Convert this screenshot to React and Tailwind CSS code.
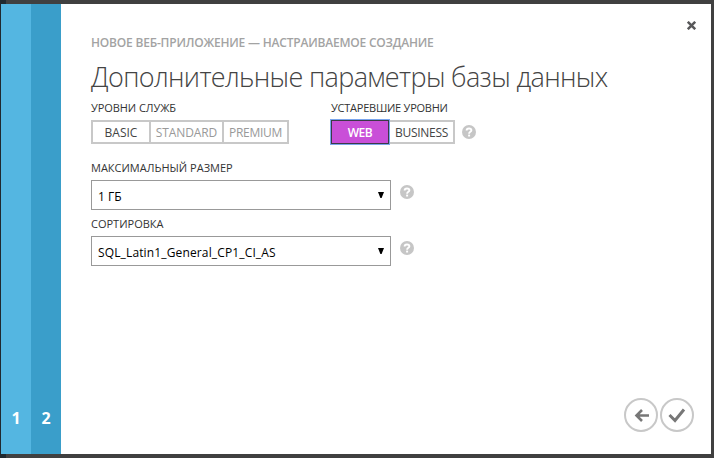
function Help({ className = '' }) {
  return (
    <svg className={`h-[14px] w-[14px] shrink-0 ${className}`} viewBox="0 0 14 14" fill="none">
      <circle cx="7" cy="7" r="7" fill="#c6c6c6" />
      <path d="M4.600 5.500C4.600 2.800 9.400 2.800 9.400 5.300C9.400 6.800 7.100 6.800 7.100 8.700" stroke="#fff" strokeWidth="1.900" />
      <path d="M6.100 9.600h2v1.900h-2z" fill="#fff" />
    </svg>
  );
}

function Label({ children, className = '' }) {
  return <div className={`h-4 whitespace-nowrap text-[11px] leading-4 text-[#333] ${className}`}>{children}</div>;
}

function Select({ value, className = '' }) {
  return (
    <div className="flex">
      <button className="flex h-[30px] w-[300px] items-center justify-between border border-[#999] bg-white pl-[6px] pr-[6px] text-[12px] text-black">
        <span className={`whitespace-nowrap pt-[3px] leading-4 ${className}`}>{value}</span>
        <svg className="-mt-px h-[6px] w-[6px]" viewBox="0 0 6 6">
          <path d="M0 0h6L3.600 6H2.400z" fill="#000" />
        </svg>
      </button>
      <Help className="ml-[9px] mt-[5px]" />
    </div>
  );
}

export default function App() {
  return (
    <div className="flex h-[458px] w-[714px] bg-[#404040] bg-linear-to-r from-[#20292f] from-[6px] to-[#404040] to-[6px] py-1 pl-px pr-[3px] font-['Open_Sans','Noto_Sans',sans-serif]">
      <div className="flex w-[30px] items-end justify-center bg-[#54b6e1] pb-[24px] text-[16px] font-bold leading-6 text-white">1</div>
      <div className="flex w-[30px] items-end justify-center bg-[#3a9eca] pb-[24px] text-[16px] font-bold leading-6 text-white">2</div>
      <div className="flex flex-1 flex-col bg-white pl-[30px]">
        <div className="flex justify-between">
          <div className="mt-[31px] h-4 whitespace-nowrap text-[12px] font-semibold leading-4 tracking-[-0.2px] text-[#a3a3a3]">
            НОВОЕ ВЕБ-ПРИЛОЖЕНИЕ — НАСТРАИВАЕМОЕ СОЗДАНИЕ
          </div>
          <button className="mr-[15px] mt-[17px] h-[9px] w-[9px]">
            <svg className="h-[9px] w-[9px]" viewBox="0 0 9 9" stroke="#58585a" strokeWidth="2.5">
              <path d="M.8.8l7.4 7.4M8.2.8L.8 8.2" />
            </svg>
          </button>
        </div>
        <h1 className="mt-[6px] h-10 whitespace-nowrap text-[27px] font-light leading-10 tracking-[-0.650px] text-[#444]">
          Дополнительные параметры базы данных
        </h1>
        <div className="mt-[3px] flex">
          <div className="w-[240px]">
            <Label className="tracking-[-0.070px]">УРОВНИ СЛУЖБ</Label>
            <div className="mt-[4px] flex h-6 w-[198px] border-2 border-[#c8c8c8] text-[12px] leading-[21px] text-[#999]">
              <button className="w-[56px] text-[#444]">BASIC</button>
              <button className="w-[73px] border-l-2 border-[#c8c8c8] tracking-[-0.120px]">STANDARD</button>
              <button className="w-[65px] border-l-2 border-[#c8c8c8] tracking-[-0.300px]">PREMIUM</button>
            </div>
          </div>
          <div>
            <Label className="tracking-[-0.240px]">УСТАРЕВШИЕ УРОВНИ</Label>
            <div className="mt-[4px] flex h-6 text-[12px]">
              <button className="z-10 h-6 w-[58px] border border-[#3b3b48] bg-[#c94fd8] pt-px font-semibold leading-[21px] tracking-[-0.500px] text-white shadow-[0_0_0_1px_#7aa5ec]">WEB</button>
              <button className="h-6 w-[66px] border-2 border-l-0 border-[#c8c8c8] pl-px leading-[21px] tracking-[-0.300px] text-[#444]">BUSINESS</button>
              <Help className="ml-[7px] mt-[5px]" />
            </div>
          </div>
        </div>
        <Label className="mt-[16px]">МАКСИМАЛЬНЫЙ РАЗМЕР</Label>
        <div className="mt-1"><Select value="1 ГБ" /></div>
        <Label className="mt-[6px]">СОРТИРОВКА</Label>
        <div className="mt-1"><Select value="SQL_Latin1_General_CP1_CI_AS" className="tracking-[0.140px]" /></div>
        <div className="mb-[22px] mr-[17px] mt-auto flex justify-end gap-[2px]">
          <button>
            <svg className="h-[34px] w-[34px]" viewBox="0 0 34 34" fill="none">
              <circle cx="17" cy="17" r="16" stroke="#c8c8c8" strokeWidth="2" />
              <path d="M25 17.500H12M18 12l-5.500 5.500 5.500 5.500" stroke="#777" strokeWidth="2.600" />
            </svg>
          </button>
          <button>
            <svg className="h-[34px] w-[34px]" viewBox="0 0 34 34" fill="none">
              <circle cx="17" cy="17" r="16" stroke="#c8c8c8" strokeWidth="2" />
              <path d="M9.500 17l5.500 5.500L24 11.500" stroke="#777" strokeWidth="3" />
            </svg>
          </button>
        </div>
      </div>
    </div>
  );
}
